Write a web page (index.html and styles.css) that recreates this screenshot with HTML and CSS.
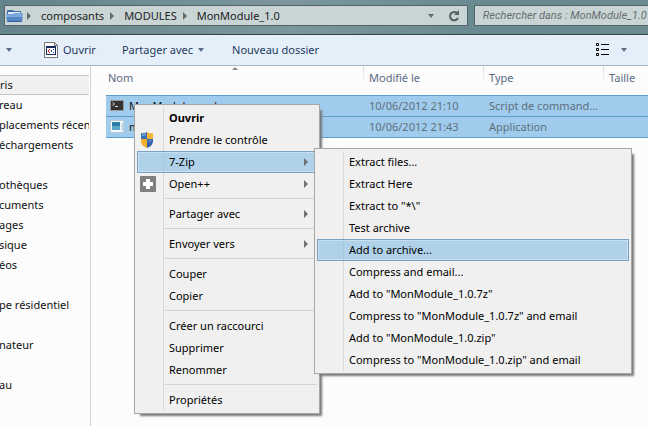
FILE: index.html
```html
<!DOCTYPE html>
<html lang="fr">
<head>
    <meta charset="UTF-8">
    <meta name="viewport" content="width=device-width, initial-scale=1.0">
    <title>MonModule_1.0</title>
    <link rel="stylesheet" href="styles.css">
</head>
<body>
    <header class="navbar">
        <nav class="address">
            <svg class="folder" width="17" height="14" viewBox="0 0 17 14">
                <path d="M1 5V2q0-1 1-1h5l1 1h6q1 0 1 1v3H1z" fill="#3f6ca8"/>
                <path d="M2 3h12v3H2z" fill="#dfeaf5"/>
                <path d="M0 6q0-1 1-1h6l1-1h8q1 0 1 1l-1 7q0 1-1 1H2q-1 0-1-1z" fill="#7ba7dc"/>
                <path d="M.5 8h16l-.5 4q0 1-1 1H2q-1 0-1-1z" fill="#5585c4"/>
                <path d="M1 12h15q0 1-1 1H2q-1 0-1-1z" fill="#34609c"/>
            </svg>
            <span class="arrow-right"></span>
            <a href="#">composants</a>
            <span class="arrow-right"></span>
            <a href="#">MODULES</a>
            <span class="arrow-right"></span>
            <a href="#">MonModule_1.0</a>
            <button class="history" aria-label="Historique"><span class="arrow-down"></span></button>
            <button class="refresh" aria-label="Actualiser">
                <svg width="12" height="14" viewBox="0 0 12 14">
                    <path d="M9.500 4.500A4.200 4.200 0 1 0 10 9" fill="none" stroke="#545c5e" stroke-width="2"/>
                    <path d="M6 6h5V1z" fill="#545c5e"/>
                </svg>
            </button>
        </nav>
        <input class="search" type="text" aria-label="Rechercher" placeholder="Rechercher dans : MonModule_1.0">
    </header>

    <div class="toolbar">
        <button class="organize" aria-label="Organiser"><span class="arrow-down"></span></button>
        <button class="open">
            <svg width="14" height="16" viewBox="0 0 14 16">
                <path d="M.5.5h10l3 3v12H.5z" fill="#fff" stroke="#777"/>
                <path d="M10.500 .5v3h3" fill="none" stroke="#777"/>
                <path d="M2 4h10v9H2z" fill="#162a5c"/>
                <path d="M3 6h8v6H3z" fill="#fff"/>
                <path d="M4 8h1v2H4zM5 7h1v1H5zM5 10h1v1H5z" fill="#d22"/>
                <path d="M7 8h1v2H7zM9 7h1v1H9zM9 10h1v1H9z" fill="#24b"/>
            </svg>
            Ouvrir
        </button>
        <button class="share">Partager avec <span class="arrow-down"></span></button>
        <button class="new-folder">Nouveau dossier</button>
        <button class="view" aria-label="Affichage">
            <svg width="13" height="14" viewBox="0 0 13 14">
                <path d="M.5.5h2v2h-2zM.5 5.500h2v2h-2zM.5 10.500h2v2h-2z" fill="#fff" stroke="#000"/>
                <path d="M5 1.500h8M5 6.500h8M5 11.500h8" stroke="#000"/>
            </svg>
            <span class="arrow-down"></span>
        </button>
    </div>

    <div class="content">
        <aside class="sidebar">
            <h2>ris</h2>
            <ul>
                <li>reau</li>
                <li>placements récents</li>
                <li>échargements</li>
            </ul>
            <ul>
                <li>othèques</li>
                <li>cuments</li>
                <li>ages</li>
                <li>sique</li>
                <li>éos</li>
            </ul>
            <ul>
                <li>pe résidentiel</li>
            </ul>
            <ul>
                <li>nateur</li>
            </ul>
            <ul>
                <li>au</li>
            </ul>
        </aside>

        <main class="files">
            <table>
                <colgroup>
                    <col class="col-name">
                    <col class="col-date">
                    <col class="col-type">
                    <col>
                </colgroup>
                <thead>
                    <tr><th>Nom<span class="sort"></span></th><th>Modifié le</th><th>Type</th><th>Taille</th></tr>
                </thead>
                <tbody>
                    <tr>
                        <td>
                            <div class="name">
                                <svg width="14" height="13" viewBox="0 0 14 13">
                                    <path d="M0 1h14v11H0z" fill="#333"/>
                                    <path d="M0 1h14v1H0zM0 1h1v11H0zM13 1h1v11h-1zM0 11h14v1H0z" fill="#999"/>
                                    <path d="M2.500 3.500l2 1.500-2 1.500M5 7.500h3" fill="none" stroke="#ddd"/>
                                </svg>
                                MonModule.cmd
                            </div>
                        </td>
                        <td>10/06/2012 21:10</td>
                        <td>Script de command...</td>
                        <td></td>
                    </tr>
                    <tr>
                        <td>
                            <div class="name">
                                <svg width="14" height="13" viewBox="0 0 14 13">
                                    <path d="M.5.5h13v12H.5z" fill="#f4f8fb" stroke="#b8ccd8"/>
                                    <path d="M2 2h8v8H2z" fill="#2b7da8"/>
                                    <path d="M2 6h8v4H2z" fill="#5aa6c8"/>
                                    <path d="M11 3h2v7h-2z" fill="#c9dbe6"/>
                                </svg>
                                module.exe
                            </div>
                        </td>
                        <td>10/06/2012 21:43</td>
                        <td>Application</td>
                        <td></td>
                    </tr>
                </tbody>
            </table>
        </main>

        <ul class="menu context-menu">
            <li><button><b>Ouvrir</b></button></li>
            <li>
                <button>
                    <svg class="icon" width="14" height="16" viewBox="0 0 14 16">
                        <path d="M1 1q3 1 6-1v7H1z" fill="#3d6fb4"/>
                        <path d="M7 0q3 2 6 1v6H7z" fill="#f3b633"/>
                        <path d="M1 7h6v9Q1 14 1 9z" fill="#eeb02c"/>
                        <path d="M7 7h6v2q0 5-6 7z" fill="#2f61ad"/>
                        <path d="M2 2q3 1 4-1v2q-2 1-4 1z" fill="#7fa4d4"/>
                        <path d="M8 8h4v1q-2 1-4 1z" fill="#5a86c6"/>
                    </svg>
                    Prendre le contrôle
                </button>
            </li>
            <li>
                <button class="active">7-Zip<span class="arrow-right"></span></button>
                <ul class="menu submenu">
                    <li><button>Extract files...</button></li>
                    <li><button>Extract Here</button></li>
                    <li><button>Extract to "*\"</button></li>
                    <li><button>Test archive</button></li>
                    <li><button class="active">Add to archive...</button></li>
                    <li><button>Compress and email...</button></li>
                    <li><button>Add to "MonModule_1.0.7z"</button></li>
                    <li><button>Compress to "MonModule_1.0.7z" and email</button></li>
                    <li><button>Add to "MonModule_1.0.zip"</button></li>
                    <li><button>Compress to "MonModule_1.0.zip" and email</button></li>
                </ul>
            </li>
            <li>
                <button>
                    <svg class="icon" width="16" height="16" viewBox="0 0 16 16">
                        <path d="M0 0h16v16H0z" fill="#808080"/>
                        <path d="M6 3h4v3h3v4h-3v3H6v-3H3V6h3z" fill="#fff"/>
                    </svg>
                    Open++<span class="arrow-right"></span>
                </button>
            </li>
            <li class="separator"></li>
            <li><button>Partager avec<span class="arrow-right"></span></button></li>
            <li class="separator"></li>
            <li><button>Envoyer vers<span class="arrow-right"></span></button></li>
            <li class="separator"></li>
            <li><button>Couper</button></li>
            <li><button>Copier</button></li>
            <li class="separator"></li>
            <li><button>Créer un raccourci</button></li>
            <li><button>Supprimer</button></li>
            <li><button>Renommer</button></li>
            <li class="separator"></li>
            <li><button>Propriétés</button></li>
        </ul>
    </div>
</body>
</html>
```
FILE: styles.css
```css
* {
    box-sizing: border-box;
}
body {
    margin: 0;
    min-height: 100vh;
    display: flex;
    flex-direction: column;
    overflow: hidden;
    background-color: #fcfcfc;
    font-family: "Noto Sans", sans-serif;
    font-size: 11px;
    line-height: 20px;
    color: #111;
}
button {
    display: flex;
    align-items: center;
    padding: 0;
    border: none;
    background: none;
    font: inherit;
    color: inherit;
    text-align: left;
    white-space: nowrap;
}
ul {
    list-style: none;
    margin: 0;
    padding: 0;
}

/* arrows */
.arrow-right {
    border: 4px solid transparent;
    border-left-color: #626a6c;
    border-right: none;
}
.arrow-down {
    border: 3px solid transparent;
    border-top: 4px solid #5a7189;
    border-bottom: none;
}

/* address bar */
.navbar {
    display: flex;
    gap: 6px;
    height: 35px;
    padding: 5px 0 8px 4px;
    background: linear-gradient(90deg, #64838a, #7b979b 45%, #688990 75%, #6b8b91);
    border-bottom: 1px solid #36474c;
}
.address {
    flex: 1;
    display: flex;
    align-items: center;
    gap: 10px;
    padding-left: 1px;
    border: 1px solid #536367;
    background-color: #c9d4d5;
}
.address a {
    color: #222;
    text-decoration: none;
}
.address a + .arrow-right {
    margin-left: -4px;
}
.address .folder {
    margin-right: -6px;
}
.history {
    margin-left: auto;
}
.history .arrow-down {
    border-top-color: #626a6c;
}
.refresh {
    padding: 0 7px 0 4px;
}
.search {
    width: 28%;
    margin-right: -6px;
    padding: 0 0 0 8px;
    border: 1px solid #536367;
    background-color: #c9d4d5;
    font: 11px Roboto, sans-serif;
}
.search::placeholder {
    color: #666e70;
    font-style: italic;
}

/* toolbar */
.toolbar {
    display: flex;
    align-items: center;
    height: 31px;
    padding-left: 6px;
    background-color: #e5effa;
    border-bottom: 1px solid #a9b6c8;
    color: #1e395b;
}
.open {
    gap: 5px;
    margin-left: 32px;
}
.share {
    gap: 5px;
    margin-left: 26px;
}
.new-folder {
    margin-left: 28px;
}
.view {
    gap: 12px;
    margin-left: auto;
    margin-right: 21px;
}

.content {
    position: relative;
    flex: 1;
    display: flex;
}

/* sidebar */
.sidebar {
    flex: none;
    width: 91px;
    padding: 9px 1px 0 0;
    border-right: 1px solid #d4d4d4;
    white-space: nowrap;
}
.sidebar h2 {
    margin: 0;
    height: 20px;
    border-top: 1px solid #c6c6c6;
    border-bottom: 1px solid #c6c6c6;
    background-color: #f0f0f0;
    font-size: 11px;
    font-weight: normal;
    line-height: 18px;
}
.sidebar ul {
    margin-bottom: 20px;
}
.sidebar li {
    overflow: hidden;
    text-indent: -1px;
}

/* file list */
.files {
    flex: 1;
    padding-left: 15px;
}
table {
    width: 100%;
    table-layout: fixed;
    border-collapse: collapse;
}
.col-name {
    width: 257px;
}
.col-date, .col-type {
    width: 120px;
}
th {
    position: relative;
    height: 29px;
    padding: 0 0 4px 6px;
    color: #5b6b85;
    font-weight: normal;
    text-align: left;
    background: linear-gradient(#d5dfe9, #fcfcfc) no-repeat left top / 1px 18px;
}
th:first-child {
    padding-left: 2px;
    background: none;
}
.sort {
    position: absolute;
    left: 49%;
    top: 1px;
    border: 3px solid transparent;
    border-bottom-color: #8a8a8a;
    border-top: none;
}
td {
    height: 21px;
    padding: 0 6px;
    color: #5f6f7b;
    white-space: nowrap;
}
td:first-child {
    padding: 0 4px;
    color: #111;
}
tbody tr {
    background-color: #9fcbed;
    border-top: 1px solid #5f9dcb;
    border-bottom: 1px solid #5f9dcb;
}
.name {
    display: flex;
    align-items: center;
    gap: 5px;
}

/* menus */
.menu {
    position: absolute;
    padding: 2px;
    border: 1px solid #a6a6a6;
    background: linear-gradient(#d9d9d9, #d9d9d9) no-repeat 28px 2px / 1px calc(100% - 4px) #f0f0f0;
    box-shadow: 4px 4px 2px -2px #777;
    color: #000;
}
.context-menu {
    left: 134px;
    top: 38px;
    width: 186px;
}
.submenu {
    left: 179px;
    top: 43px;
    width: 318px;
}
.menu button {
    position: relative;
    width: 100%;
    height: 22px;
    padding: 0 9px 0 32px;
}
.menu .active {
    background-color: rgba(132, 190, 230, .6);
    border: 1px solid #7da2c1;
    box-shadow: inset 0 0 0 1px rgba(255, 255, 255, .3);
    padding: 0 8px 0 31px;
}
.menu .icon {
    position: absolute;
    left: 3px;
}
.menu .arrow-right {
    margin-left: auto;
    border-left-color: #707070;
}
.separator {
    height: 8px;
    margin-left: 28px;
    background: linear-gradient(#d4d4d4, #d4d4d4) no-repeat left 3px / 100% 1px;
}
```
